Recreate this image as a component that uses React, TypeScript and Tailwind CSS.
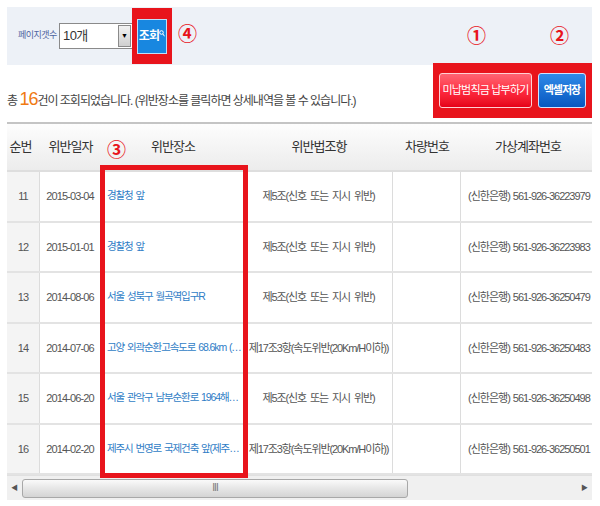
import React from 'react'

const rows = [
  { no: 11, date: '2015-03-04', place: '경찰청 앞', law: '제5조(신호 또는 지시 위반)', acct: '(신한은행) 561-926-36223979' },
  { no: 12, date: '2015-01-01', place: '경찰청 앞', law: '제5조(신호 또는 지시 위반)', acct: '(신한은행) 561-926-36223983' },
  { no: 13, date: '2014-08-06', place: '서울 성북구 월곡역입구R', law: '제5조(신호 또는 지시 위반)', acct: '(신한은행) 561-926-36250479' },
  { no: 14, date: '2014-07-06', place: '고양 외곽순환고속도로 68.6km (…', law: '제17조3항(속도위반(20Km/H이하))', acct: '(신한은행) 561-926-36250483' },
  { no: 15, date: '2014-06-20', place: '서울 관악구 남부순환로 1964해…', law: '제5조(신호 또는 지시 위반)', acct: '(신한은행) 561-926-36250498' },
  { no: 16, date: '2014-02-20', place: '제주시 번영로 국제건축 앞(제주…', law: '제17조3항(속도위반(20Km/H이하))', acct: '(신한은행) 561-926-36250501' },
]

const cols = 'grid grid-cols-[33px_61px_144px_148px_68px_146px]'

function Mark({ n }: { n: string }) {
  return <span className="text-[19px] leading-none font-bold text-[#e8141c]">{n}</span>
}

export default function App() {
  return (
    <div className="w-[600px] h-[506px] bg-white font-['Liberation_Sans','Noto_Sans_CJK_KR',sans-serif] overflow-hidden">
      {/* search bar */}
      <div className="mx-[7px] mt-[7px] h-[58px] w-[585px] bg-[#edf1f7] flex items-center">
        <span className="ml-[11px] text-[9px] tracking-[-0.5px] text-[#4d64a0]">페이지갯수</span>
        <div className="ml-[2px] w-[74px] h-[26px] bg-white border border-[#8a8a8a] flex items-center">
          <span className="flex-1 pl-[3px] text-[13px] text-[#333] tracking-[-0.5px]">10개</span>
          <span className="w-[13px] h-[22px] mr-[1px] bg-gradient-to-b from-[#f2f2f2] to-[#cfcfcf] border border-[#8a8a8a] flex items-center justify-center text-[7px] text-black">▼</span>
        </div>
        <div className="ml-[-1px] h-[56px] bg-[#e8141c] px-[5px] flex items-center">
          <button className="h-[35px] w-[30px] bg-[#1887e0] border border-[#bfe0fa] text-white text-[12px] font-bold flex items-center justify-center tracking-[-1px]">
            조회
            <svg width="6" height="7" viewBox="0 0 6 7" className="-mt-[6px]">
              <circle cx="2.5" cy="2.5" r="1.8" fill="none" stroke="white" strokeWidth="1" />
              <path d="M3.8 3.8 5.5 6.3" stroke="white" strokeWidth="1" />
            </svg>
          </button>
        </div>
        <span className="ml-[6px]"><Mark n="④" /></span>
        <div className="ml-auto mr-[23px] flex items-center gap-[64px]">
          <Mark n="①" />
          <Mark n="②" />
        </div>
      </div>

      {/* count + action buttons */}
      <div className="mx-[7px] w-[585px] h-[53px] flex items-end justify-between">
        <p className="pb-[8px] text-[12px] text-[#444] tracking-[-1px] whitespace-nowrap">
          총 <span className="text-[18px] leading-none text-[#f07a12]">16</span>건이 조회되었습니다. (위반장소를 클릭하면 상세내역을 볼 수 있습니다.)
        </p>
        <div className="h-[55px] bg-[#e8141c] px-[6px] flex items-center gap-[6px]">
          <button className="w-[93px] h-[35px] rounded-[3px] border border-[#ffd0d4] bg-gradient-to-b from-[#ff6373] via-[#ff2a40] to-[#e60018] text-white text-[11px] tracking-[-0.8px]">
            미납범칙금 납부하기
          </button>
          <button className="w-[48px] h-[35px] rounded-[3px] border border-[#cfe3ff] bg-gradient-to-b from-[#2f8ae8] to-[#0757c0] text-white text-[11px] font-bold tracking-[-1px]">
            엑셀저장
          </button>
        </div>
      </div>

      {/* table */}
      <div className="relative mx-[7px] mt-[4px] w-[585px] overflow-hidden">
        <div className={`${cols} h-[50px] border-t-2 border-[#c4c4c4] bg-gradient-to-b from-[#fdfdfd] to-[#ececec] items-center text-center text-[13px] text-[#333] tracking-[-1px] border-b-2 border-b-[#dedede]`}>
          <span className="pr-[6px]">순번</span>
          <span>위반일자</span>
          <span>위반장소</span>
          <span>위반법조항</span>
          <span>차량번호</span>
          <span className="pr-[12px]">가상계좌번호</span>
        </div>
        {rows.map((r) => (
          <div key={r.no} className={`${cols} h-[50.5px] border-b-2 border-[#e3e3e3] text-[11px] text-[#555] tracking-[-0.9px] whitespace-nowrap`}>
            <div className="bg-[#f4f4f4] border-r border-[#dcdcdc] flex items-center justify-center">{r.no}</div>
            <div className="border-r border-[#dcdcdc] flex items-center justify-center">{r.date}</div>
            <div className="border-r border-[#dcdcdc] flex items-center pl-[6px] overflow-hidden text-[#2f7dc6] text-[10.5px] tracking-[-1.1px] [word-spacing:1px]">{r.place}</div>
            <div className="border-r border-[#dcdcdc] flex items-center justify-center overflow-hidden tracking-[-1.1px] [word-spacing:2px]">{r.law}</div>
            <div className="border-r border-[#dcdcdc]"></div>
            <div className="flex items-center pl-[7px] tracking-[-1px] [word-spacing:1px]">{r.acct}</div>
          </div>
        ))}

        {/* horizontal scrollbar */}
        <div className="h-[25px] bg-[#f0f0f0] border-t border-[#e0e0e0] flex items-center">
          <span className="w-[15px] text-center text-[7px] text-[#555]">◀</span>
          <div className="w-[386px] h-[19px] rounded-[3px] border border-[#a8a8a8] bg-gradient-to-b from-[#fafafa] via-[#e6e6e6] to-[#d4d4d4] flex items-center justify-center">
            <span className="text-[10px] leading-none text-[#777] tracking-[-1px]">III</span>
          </div>
          <span className="ml-auto w-[15px] text-center text-[7px] text-[#555]">▶</span>
        </div>

        {/* highlight box ③ */}
        <span className="absolute left-[100px] top-[18px]"><Mark n="③" /></span>
        <div className="absolute left-[93px] top-[43px] w-[148px] h-[313px] border-[5px] border-[#e8141c]"></div>
      </div>
    </div>
  )
}
